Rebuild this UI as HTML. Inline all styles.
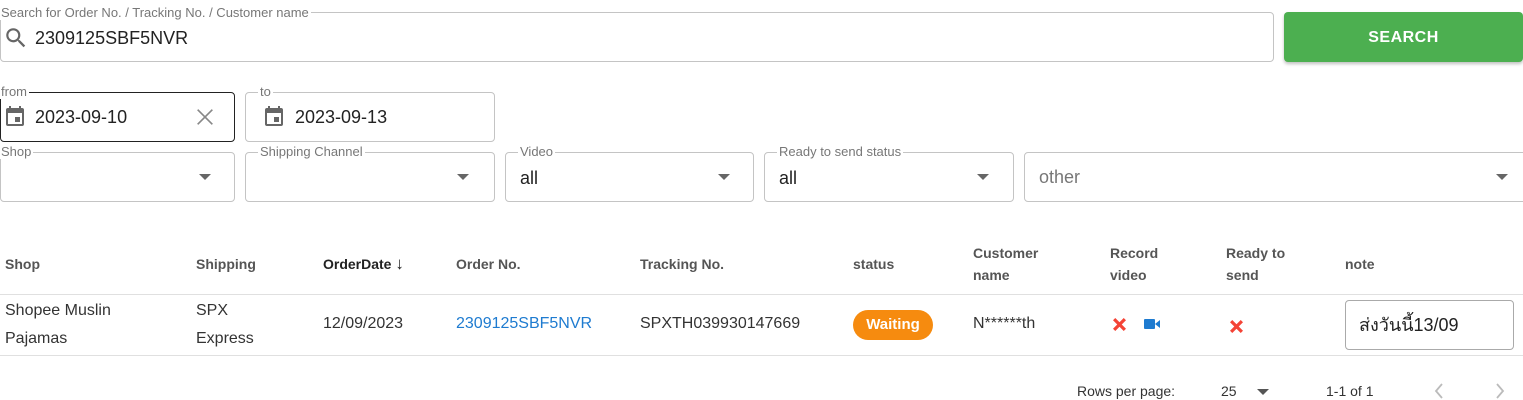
<!DOCTYPE html>
<html><head><meta charset="utf-8"><style>
*{box-sizing:border-box;margin:0;padding:0}
body{width:1523px;height:400px;overflow:hidden;background:#fff;font-family:"Liberation Sans","DejaVu Sans",sans-serif;color:#222;position:relative}
.a{position:absolute}
.box{position:absolute;border:1px solid #c4c4c4;border-radius:4px}
.lbl{position:absolute;font-size:13px;color:#777;background:#fff;padding:0 2px;line-height:14px;top:-8px}
.val{position:absolute;font-size:18px;color:#222}
.arr{position:absolute;width:0;height:0;border-left:6px solid transparent;border-right:6px solid transparent;border-top:6px solid #666}
.h{position:absolute;font-size:14px;color:#555;font-weight:bold;line-height:22px}
.d{position:absolute;font-size:16px;color:#333;line-height:28px}
</style></head><body>
<div class="box" style="left:0;top:12px;width:1274px;height:50px"><span class="lbl" style="left:-2px;top:-7px">Search for Order No. / Tracking No. / Customer name</span>
<svg class="a" style="left:2px;top:12px" width="26" height="26" viewBox="0 0 24 24"><path fill="#666" d="M15.5 14h-.79l-.28-.27A6.47 6.47 0 0 0 16 9.5 6.5 6.5 0 1 0 9.5 16c1.61 0 3.09-.59 4.23-1.57l.27.28v.79l5 4.99L20.49 19l-4.99-5zm-6 0C7.01 14 5 11.99 5 9.5S7.01 5 9.5 5 14 7.01 14 9.5 11.99 14 9.5 14z"/></svg>
<span class="val" style="left:34px;top:15px">2309125SBF5NVR</span></div>
<div class="a" style="left:1284px;top:12px;width:239px;height:50px;background:#4caf50;border-radius:4px;box-shadow:0 2px 3px rgba(0,0,0,.25);color:#fff;font-weight:bold;font-size:16px;text-align:center;line-height:52px;letter-spacing:.5px">SEARCH</div>

<div class="box" style="left:0;top:92px;width:235px;height:50px;border-color:#222"><span class="lbl" style="left:-2px">from</span>
<svg class="a" style="left:2px;top:12px" width="24" height="24" viewBox="0 0 24 24"><path fill="#666" d="M17 12h-5v5h5v-5zM16 1v2H8V1H6v2H5a2 2 0 0 0-2 2v14a2 2 0 0 0 2 2h14a2 2 0 0 0 2-2V5a2 2 0 0 0-2-2h-1V1h-2zm3 18H5V8h14v11z"/></svg>
<span class="val" style="left:34px;top:14px">2023-09-10</span>
<svg class="a" style="left:193px;top:13px" width="22" height="22" viewBox="0 0 24 24"><path stroke="#888" stroke-width="1.8" d="M4 4L20 20M20 4L4 20"/></svg></div>
<div class="box" style="left:245px;top:92px;width:250px;height:50px"><span class="lbl" style="left:12px">to</span>
<svg class="a" style="left:16px;top:12px" width="24" height="24" viewBox="0 0 24 24"><path fill="#666" d="M17 12h-5v5h5v-5zM16 1v2H8V1H6v2H5a2 2 0 0 0-2 2v14a2 2 0 0 0 2 2h14a2 2 0 0 0 2-2V5a2 2 0 0 0-2-2h-1V1h-2zm3 18H5V8h14v11z"/></svg>
<span class="val" style="left:49px;top:14px">2023-09-13</span></div>

<div class="box" style="left:0;top:152px;width:235px;height:50px"><span class="lbl" style="left:-2px">Shop</span><span class="arr" style="left:198px;top:21px"></span></div>
<div class="box" style="left:245px;top:152px;width:250px;height:50px"><span class="lbl" style="left:12px">Shipping Channel</span><span class="arr" style="left:211px;top:21px"></span></div>
<div class="box" style="left:505px;top:152px;width:249px;height:50px"><span class="lbl" style="left:12px">Video</span><span class="val" style="left:14px;top:15px">all</span><span class="arr" style="left:212px;top:21px"></span></div>
<div class="box" style="left:764px;top:152px;width:250px;height:50px"><span class="lbl" style="left:12px">Ready to send status</span><span class="val" style="left:14px;top:15px">all</span><span class="arr" style="left:212px;top:21px"></span></div>
<div class="box" style="left:1024px;top:152px;width:520px;height:50px"><span class="val" style="left:14px;top:14px;color:#777">other</span><span class="arr" style="left:471px;top:21px"></span></div>

<div class="h" style="left:5px;top:253px">Shop</div>
<div class="h" style="left:196px;top:253px">Shipping</div>
<div class="h" style="left:323px;top:253px;color:#222">OrderDate <span style="font-size:17px;font-weight:normal">↓</span></div>
<div class="h" style="left:456px;top:253px">Order No.</div>
<div class="h" style="left:640px;top:253px">Tracking No.</div>
<div class="h" style="left:853px;top:253px">status</div>
<div class="h" style="left:973px;top:242px">Customer<br>name</div>
<div class="h" style="left:1110px;top:242px">Record<br>video</div>
<div class="h" style="left:1226px;top:242px">Ready to<br>send</div>
<div class="h" style="left:1345px;top:253px">note</div>
<div class="a" style="left:0;top:294px;width:1523px;height:1px;background:#e0e0e0"></div>

<div class="d" style="left:5px;top:297px">Shopee Muslin<br>Pajamas</div>
<div class="d" style="left:196px;top:297px">SPX<br>Express</div>
<div class="d" style="left:323px;top:310px">12/09/2023</div>
<div class="d" style="left:456px;top:310px;color:#1e7bd0">2309125SBF5NVR</div>
<div class="d" style="left:640px;top:310px">SPXTH039930147669</div>
<div class="a" style="left:853px;top:310px;width:80px;height:30px;border-radius:15px;background:#f68b0f;color:#fff;font-size:15px;font-weight:bold;text-align:center;line-height:30px">Waiting</div>
<div class="d" style="left:973px;top:310px">N******th</div>
<svg class="a" style="left:1112px;top:317px" width="15" height="15" viewBox="0 0 14 14"><path stroke="#f44336" stroke-width="3" d="M2 2L12 12M12 2L2 12"/></svg>
<svg class="a" style="left:1144px;top:318px" width="16" height="12" viewBox="0 0 16 12"><rect x="0" y="1" width="11" height="10" rx="1" fill="#1e7bd0"/><path d="M11 6L16 2V10Z" fill="#1e7bd0"/></svg>
<svg class="a" style="left:1229px;top:319px" width="15" height="15" viewBox="0 0 14 14"><path stroke="#f44336" stroke-width="3" d="M2 2L12 12M12 2L2 12"/></svg>
<div class="a" style="left:1345px;top:300px;width:169px;height:50px;border:1px solid #aaa;border-radius:4px;font-size:18px;line-height:48px;padding-left:13px;color:#222">ส่งวันนี้13/09</div>
<div class="a" style="left:0;top:355px;width:1523px;height:1px;background:#e0e0e0"></div>

<div class="a" style="left:1077px;top:383px;font-size:14px;color:#333">Rows per page:</div>
<div class="a" style="left:1221px;top:383px;font-size:14px;color:#333">25</div>
<span class="arr" style="left:1257px;top:389px;border-top-color:#555"></span>
<div class="a" style="left:1326px;top:383px;font-size:14px;color:#333">1-1 of 1</div>
<svg class="a" style="left:1432px;top:382px" width="14" height="18" viewBox="0 0 14 18"><path d="M10 2L4 9L10 16" stroke="#bbb" stroke-width="1.8" fill="none"/></svg>
<svg class="a" style="left:1493px;top:382px" width="14" height="18" viewBox="0 0 14 18"><path d="M4 2L10 9L4 16" stroke="#bbb" stroke-width="1.8" fill="none"/></svg>
</body></html>
